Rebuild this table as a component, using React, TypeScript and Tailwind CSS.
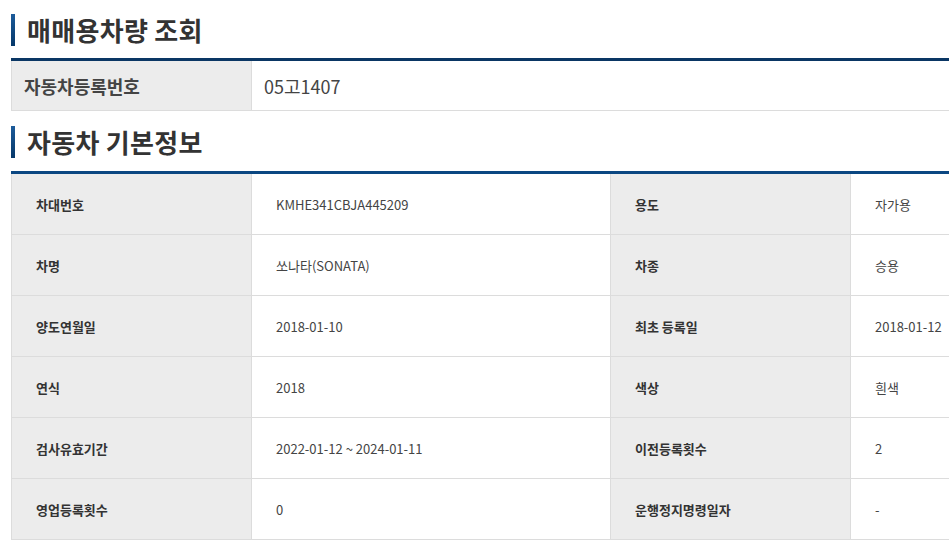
import React from 'react';

const rows: [string, string, string, string][] = [
  ['차대번호', 'KMHE341CBJA445209', '용도', '자가용'],
  ['차명', '쏘나타(SONATA)', '차종', '승용'],
  ['양도연월일', '2018-01-10', '최초 등록일', '2018-01-12'],
  ['연식', '2018', '색상', '흰색'],
  ['검사유효기간', '2022-01-12 ~ 2024-01-11', '이전등록횟수', '2'],
  ['영업등록횟수', '0', '운행정지명령일자', '-'],
];

function Heading({ children }: { children: React.ReactNode }) {
  return (
    <div className="flex items-center h-8">
      <span className="w-1 h-8 bg-gradient-to-b from-[#1d5c9b] to-[#063869]" />
      <h2 className="ml-3 text-[26px] leading-8 font-bold text-[#333] tracking-[0.3px]">{children}</h2>
    </div>
  );
}

export default function App() {
  const font = { fontFamily: '"Noto Sans CJK KR", "Noto Sans", sans-serif' };
  return (
    <div className="w-[949px] h-[548px] overflow-hidden bg-white" style={font}>
      <div className="w-[1090px] pl-[11px] pt-[14px]">
        <Heading>매매용차량 조회</Heading>

        <div className="mt-3 border-t-[3px] border-[#0a3664]">
          <div className="flex h-[50px] border-b border-l border-[#dcdcdc]">
            <div className="w-[240px] bg-[#ececec] border-r border-[#dcdcdc] flex items-center pl-3 pt-[2px] text-[18px] font-bold text-[#444]">
              자동차등록번호
            </div>
            <div className="flex-1 flex items-center pl-3 pt-[2px] text-[18px] text-[#444]">05고1407</div>
          </div>
        </div>

        <div className="mt-[15px]">
          <Heading>자동차 기본정보</Heading>
        </div>

        <div className="mt-[13px] border-t-[3px] border-[#0b4782]">
          {rows.map((r, i) => (
            <div key={i} className="flex h-[61px] border-b border-l border-[#dcdcdc] text-[13px]">
              <div className="w-[240px] bg-[#ececec] border-r border-[#dcdcdc] flex items-center pl-6 pt-[2px] font-bold text-[#333]">
                {r[0]}
              </div>
              <div className="w-[359px] border-r border-[#dcdcdc] flex items-center pl-6 pt-[2px] text-[#444]">{r[1]}</div>
              <div className="w-[240px] bg-[#ececec] border-r border-[#dcdcdc] flex items-center pl-6 pt-[2px] font-bold text-[#333]">
                {r[2]}
              </div>
              <div className="flex-1 flex items-center pl-6 pt-[2px] text-[#444]">{r[3]}</div>
            </div>
          ))}
        </div>
      </div>
    </div>
  );
}
